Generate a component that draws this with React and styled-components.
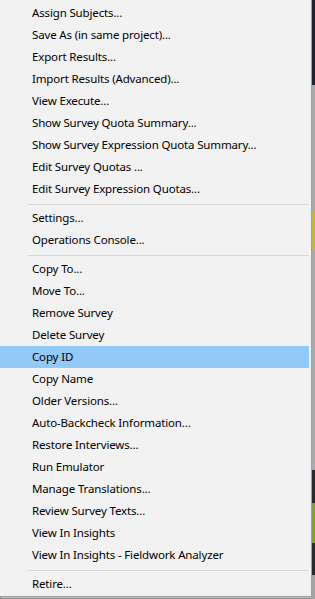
import React from "react";
import styled, { createGlobalStyle } from "styled-components";

const GlobalStyle = createGlobalStyle`
  html, body {
    margin: 0;
    padding: 0;
    background: #8e8e8e;
  }
  body {
    font-family: "Noto Sans", "Liberation Sans", sans-serif;
  }
`;

// menu entries, null = separator
const items = [
  "Assign Subjects...",
  "Save As (in same project)...",
  "Export Results...",
  "Import Results (Advanced)...",
  "View Execute...",
  "Show Survey Quota Summary...",
  "Show Survey Expression Quota Summary...",
  "Edit Survey Quotas ...",
  "Edit Survey Expression Quotas...",
  null,
  "Settings...",
  "Operations Console...",
  null,
  "Copy To...",
  "Move To...",
  "Remove Survey",
  "Delete Survey",
  "Copy ID",
  "Copy Name",
  "Older Versions...",
  "Auto-Backcheck Information...",
  "Restore Interviews...",
  "Run Emulator",
  "Manage Translations...",
  "Review Survey Texts...",
  "View In Insights",
  "View In Insights - Fieldwork Analyzer",
  null,
  "Retire...",
];

// background peeking out on the right edge
const strip = [
  { h: 85, c: "#1d2530" },
  { h: 127, c: "#a9a9a9" },
  { h: 38, c: "#c9b43a" },
  { h: 220, c: "#a9a9a9" },
  { h: 33, c: "#272b30" },
  { h: 40, c: "#7aa52c" },
  { h: 32, c: "#272b30" },
  { h: 24, c: "#a4a4a4" },
];

function App() {
  return (
    <>
      <GlobalStyle />
      <Page>
        <Menu>
          {items.map((label, i) =>
            label === null ? (
              <Separator key={i} />
            ) : (
              <Item key={i} active={label === "Copy ID"}>
                {label}
              </Item>
            )
          )}
        </Menu>
        <Strip>
          {strip.map((s, i) => (
            <StripPart key={i} $h={s.h} $c={s.c} />
          ))}
        </Strip>
      </Page>
    </>
  );
}

const Page = styled.div`
  display: flex;
  align-items: flex-start;
  width: 315px;
  height: 599px;
  overflow: hidden;
`;

const Menu = styled.div`
  width: 311px;
  flex-shrink: 0;
  background-color: #f2f2f2;
  border-right: 1px solid #a0a0a0;
  border-bottom: 1px solid #a0a0a0;
  padding: 2px 0 1px;
  box-shadow: 1px 1px 0 #bdbdbd;
`;

const Item = styled.div.withConfig({
  shouldForwardProp: (prop) => prop !== "active",
})`
  height: 22px;
  line-height: 22px;
  padding-left: 32px;
  margin-right: 2px;
  font-size: 11.5px;
  letter-spacing: -0.15px;
  color: #000;
  white-space: nowrap;
  background-color: ${(props) => (props.active ? "#91c9f7" : "transparent")};
`;

const Separator = styled.div`
  height: 7px;
  margin: 0 2px 0 28px;
  padding-top: 4px;
  box-sizing: border-box;

  &::before {
    content: "";
    display: block;
    height: 1px;
    background-color: #d7d7d7;
  }
`;

const Strip = styled.div`
  display: flex;
  flex-direction: column;
  flex: 1;
`;

const StripPart = styled.div`
  height: ${(props) => props.$h}px;
  background-color: ${(props) => props.$c};
`;

export default App;
